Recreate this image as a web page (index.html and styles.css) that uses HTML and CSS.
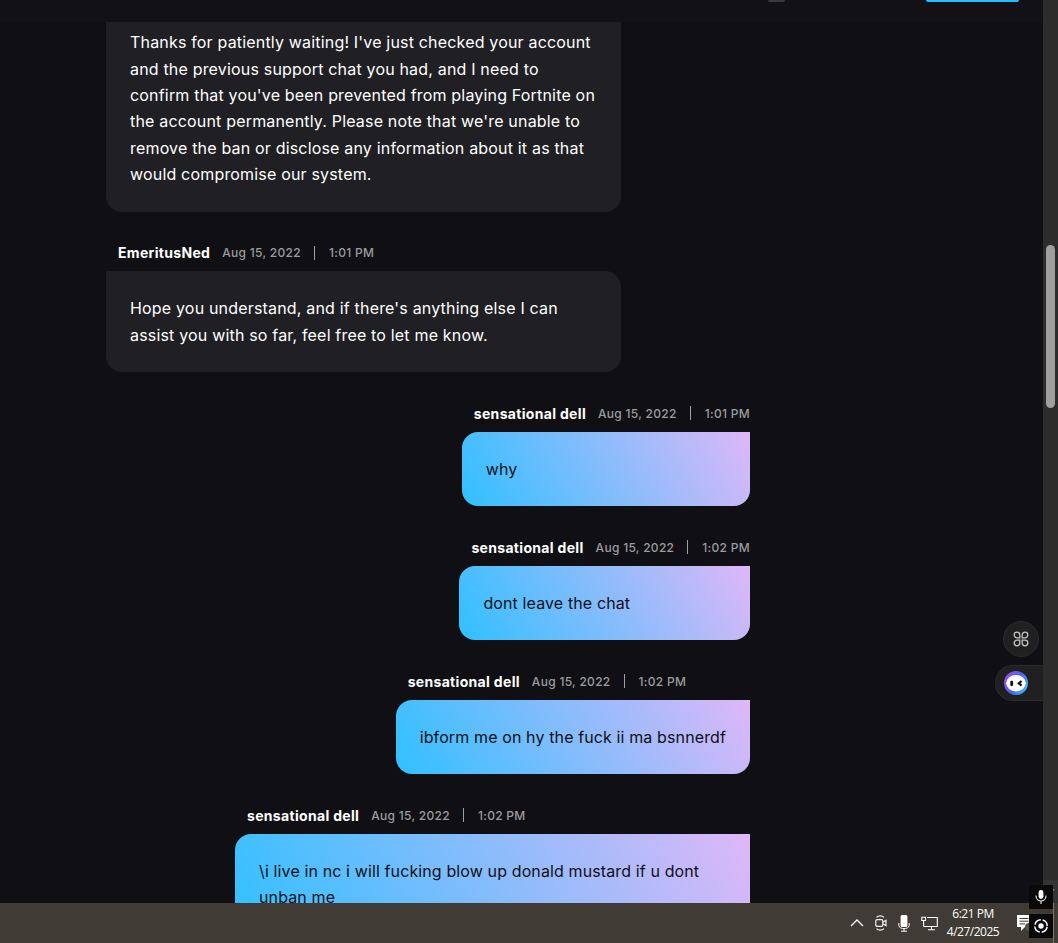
FILE: index.html
```
<!DOCTYPE html>
<html lang="en">
<head>
    <meta charset="UTF-8">
    <meta name="viewport" content="width=device-width, initial-scale=1.0">
    <title>Support Chat</title>
    <link rel="stylesheet" href="styles.css">
</head>
<body>

    <div class="window">
        <div class="page">
            <div class="top-bar">
                <span class="top-avatar"></span>
                <span class="top-button"></span>
            </div>

            <div class="chat">
                <div class="message">
                    <div class="bubble">Thanks for patiently waiting! I've just checked your account and the previous support chat you had, and I need to confirm that you've been prevented from playing Fortnite on the account permanently. Please note that we're unable to remove the ban or disclose any information about it as that would compromise our system.</div>
                </div>

                <div class="message">
                    <div class="meta"><b>EmeritusNed</b><span>Aug 15, 2022</span><i></i><span>1:01 PM</span></div>
                    <div class="bubble">Hope you understand, and if there's anything else I can assist you with so far, feel free to let me know.</div>
                </div>

                <div class="message user">
                    <div class="meta"><b>sensational dell</b><span>Aug 15, 2022</span><i></i><span>1:01 PM</span></div>
                    <div class="bubble">why</div>
                </div>

                <div class="message user">
                    <div class="meta"><b>sensational dell</b><span>Aug 15, 2022</span><i></i><span>1:02 PM</span></div>
                    <div class="bubble">dont leave the chat</div>
                </div>

                <div class="message user">
                    <div class="meta"><b>sensational dell</b><span>Aug 15, 2022</span><i></i><span>1:02 PM</span></div>
                    <div class="bubble">ibform me on hy the fuck ii ma bsnnerdf</div>
                </div>

                <div class="message user">
                    <div class="meta"><b>sensational dell</b><span>Aug 15, 2022</span><i></i><span>1:02 PM</span></div>
                    <div class="bubble">\i live in nc i will fucking blow up donald mustard if u dont unban me</div>
                </div>
            </div>
        </div>

        <div class="scrollbar">
            <div class="thumb"></div>
            <div class="scroll-down">
                <svg width="9" height="5" viewBox="0 0 9 5"><path d="M0 0H9L4.5 5Z" fill="#777"/></svg>
            </div>
        </div>

        <div class="side-tools">
            <div class="tool-round">
                <svg width="16" height="16" viewBox="0 0 16 16" fill="none" stroke="#c4c4c6" stroke-width="1.3">
                    <path d="M4 1.2A2.8 2.8 0 0 1 6.8 4V6.8H4A2.8 2.8 0 0 1 4 1.2Z"/>
                    <path d="M12 1.2A2.8 2.8 0 0 0 9.2 4V6.8H12A2.8 2.8 0 0 0 12 1.2Z"/>
                    <path d="M4 14.8A2.8 2.8 0 0 0 6.8 12V9.2H4A2.8 2.8 0 0 0 4 14.8Z"/>
                    <path d="M12 14.8A2.8 2.8 0 0 1 9.2 12V9.2H12A2.8 2.8 0 0 1 12 14.8Z"/>
                </svg>
            </div>
            <div class="tool-tab">
                <svg width="24" height="24" viewBox="0 0 24 24">
                    <defs>
                        <linearGradient id="ring" x1="0" y1="0.3" x2="1" y2="0.8">
                            <stop offset="0" stop-color="#9254e8"/>
                            <stop offset="0.5" stop-color="#4c60ee"/>
                            <stop offset="1" stop-color="#3cc4ee"/>
                        </linearGradient>
                    </defs>
                    <circle cx="12" cy="12" r="12" fill="url(#ring)"/>
                    <ellipse cx="12" cy="12.2" rx="9.8" ry="8.2" fill="#fff"/>
                    <rect x="6.3" y="9.8" width="2.8" height="5.2" rx="1" fill="#15151c"/>
                    <path d="M17.6 10L14.8 12.3L17.6 14.6" fill="none" stroke="#15151c" stroke-width="2.2"/>
                </svg>
            </div>
        </div>
    </div>

    <div class="taskbar">
        <svg class="chevron" width="14" height="8" viewBox="0 0 14 8" fill="none" stroke="#fff" stroke-width="1.3">
            <path d="M1 7L7 1L13 7"/>
        </svg>
        <svg class="meet" width="12" height="16" viewBox="0 0 12 16" fill="none" stroke="#f0efed" stroke-width="1.2">
            <rect x="0.8" y="4.6" width="7" height="6.8" rx="1.3"/>
            <path d="M7.8 7.2L11 5.3V10.7L7.8 8.8M1.5 2.3C3.5 0.3 7 0.3 9 2.3M1.5 13.7C3.5 15.7 7 15.7 9 13.7"/>
        </svg>
        <svg class="mic" width="12" height="17" viewBox="0 0 12 17">
            <rect x="2.6" y="0" width="6.8" height="12" rx="1.5" fill="#fff"/>
            <path d="M0.8 8V10.5C0.8 14.6 11.2 14.6 11.2 10.5V8M6 13.5V16M3 16.2H9" fill="none" stroke="#fff" stroke-width="1"/>
        </svg>
        <svg class="network" width="17" height="15" viewBox="0 0 17 15" fill="none" stroke="#fff" stroke-width="1.1">
            <path d="M6 1.5H16.3V10.5H2.6M10.5 10.5V13.5M7 13.8H14"/>
            <path d="M0.8 1.2H4.5V4.5H0.8ZM2.6 4.5V10.5"/>
        </svg>
        <div class="clock">6:21 PM<br>4/27/2025</div>
        <svg class="notes" width="18" height="16" viewBox="0 0 18 16">
            <path d="M0 0H14V12H8L4 16V12H0Z" fill="#fff"/>
            <path d="M2.5 3.5H11.5M2.5 6.2H11.5M2.5 8.9H8" stroke="#403c35" stroke-width="1"/>
            <circle cx="12" cy="12" r="4" fill="#55524c"/>
        </svg>
        <div class="show-desktop"></div>
    </div>

    <div class="recorder">
        <div class="rec-box">
            <svg width="24" height="24" viewBox="0 0 24 24">
                <rect x="9.6" y="5" width="4.8" height="9" rx="2.4" fill="#fff"/>
                <path d="M7 10.5C7 17.8 17 17.8 17 10.5M12 16V19" fill="none" stroke="#ddd" stroke-width="1.2"/>
            </svg>
        </div>
        <div class="rec-box">
            <svg width="24" height="24" viewBox="0 0 24 24">
                <circle cx="12" cy="12" r="6.2" fill="none" stroke="#fff" stroke-width="1.5" stroke-dasharray="7.74 2" stroke-dashoffset="-1"/>
                <circle cx="12" cy="12" r="2.7" fill="#fff"/>
            </svg>
        </div>
    </div>

</body>
</html>
```
FILE: styles.css
```
* {
    box-sizing: border-box;
}

body {
    margin: 0;
    height: 943px;
    display: flex;
    flex-direction: column;
    overflow: hidden;
    position: relative;
    background: #101014;
    color: #fff;
    font-family: Inter, sans-serif;
}

.window {
    height: 903px;
    display: flex;
    position: relative;
    overflow: hidden;
}

.page {
    flex: 1;
    overflow: hidden;
}

.top-bar {
    height: 22px;
    display: flex;
    justify-content: flex-end;
    align-items: flex-start;
    padding-right: 24px;
    gap: 141px;
    background: #121216;
}

.top-avatar {
    width: 17px;
    height: 2px;
    background: #3a3a3e;
    border-radius: 0 0 9px 9px;
}

.top-button {
    width: 93px;
    height: 2px;
    background: #26bbff;
    border-radius: 0 0 6px 6px;
}

.chat {
    width: 644px;
    margin-left: 106px;
}

.message {
    width: fit-content;
    max-width: 515px;
}

.message.user {
    margin-left: auto;
}

.meta {
    display: flex;
    align-items: center;
    height: 59.6px;
    padding: 31px 0 8.6px 12px;
    font-size: 12px;
    font-weight: 500;
    letter-spacing: 0.3px;
    color: #9c9c9f;
    white-space: nowrap;
}

.meta b {
    margin-right: 12px;
    font-size: 14px;
    font-weight: 700;
    letter-spacing: 0.32px;
    color: #fff;
}

.meta i {
    width: 1px;
    height: 14px;
    margin: 0 14px 0 13px;
    background: #a0a0a4;
}

.bubble {
    padding: 24px;
    border-radius: 0 16px 16px 16px;
    background: #202024;
    font-size: 16px;
    line-height: 26.4px;
    letter-spacing: 0.18px;
}

.message:first-child .bubble {
    padding-top: 7.2px;
    border-top-right-radius: 0;
}

.user .bubble {
    border-radius: 16px 0 16px 16px;
    background: linear-gradient(60deg, #30c0ff, #deb8f8);
    color: #101014;
    letter-spacing: 0.12px;
}

.scrollbar {
    width: 15px;
    padding-top: 245px;
    display: flex;
    flex-direction: column;
    background: #2c2c2c;
}

.thumb {
    height: 163px;
    margin: 0 3px;
    border-radius: 5px;
    background: #9f9f9f;
}

.scroll-down {
    height: 23px;
    margin-top: auto;
    display: flex;
    align-items: center;
    justify-content: center;
    background: #343434;
}

.side-tools {
    position: absolute;
    top: 621px;
    right: 15px;
    display: flex;
    flex-direction: column;
    align-items: flex-end;
    gap: 8px;
}

.tool-round {
    width: 36px;
    height: 36px;
    margin-right: 4px;
    display: flex;
    align-items: center;
    justify-content: center;
    border: 1px solid #2b2b2d;
    border-radius: 50%;
    background: #202021;
}

.tool-tab {
    width: 48px;
    height: 36px;
    display: flex;
    align-items: center;
    padding-left: 8px;
    border: 1px solid #2b2b2d;
    border-right: none;
    border-radius: 18px 0 0 18px;
    background: #202021;
}

.taskbar {
    height: 40px;
    display: flex;
    align-items: center;
    padding-left: 850px;
    background: #403c35;
}

.meet {
    margin-left: 11px;
}

.mic {
    margin-left: 11px;
}

.network {
    margin-left: 11px;
}

.clock {
    width: 66px;
    margin-left: 2px;
    text-align: center;
    font-family: "Open Sans", sans-serif;
    font-size: 12px;
    line-height: 18px;
    letter-spacing: -0.5px;
}

.notes {
    margin-left: 11px;
}

.show-desktop {
    width: 5px;
    height: 40px;
    margin-left: auto;
    border-left: 1px solid #7a776f;
}

/* recording overlay on top of the desktop */
.recorder {
    position: absolute;
    right: 5px;
    top: 885px;
    display: flex;
    flex-direction: column;
    gap: 5px;
}

.rec-box {
    width: 24px;
    height: 24px;
    background: #090909;
}
```
